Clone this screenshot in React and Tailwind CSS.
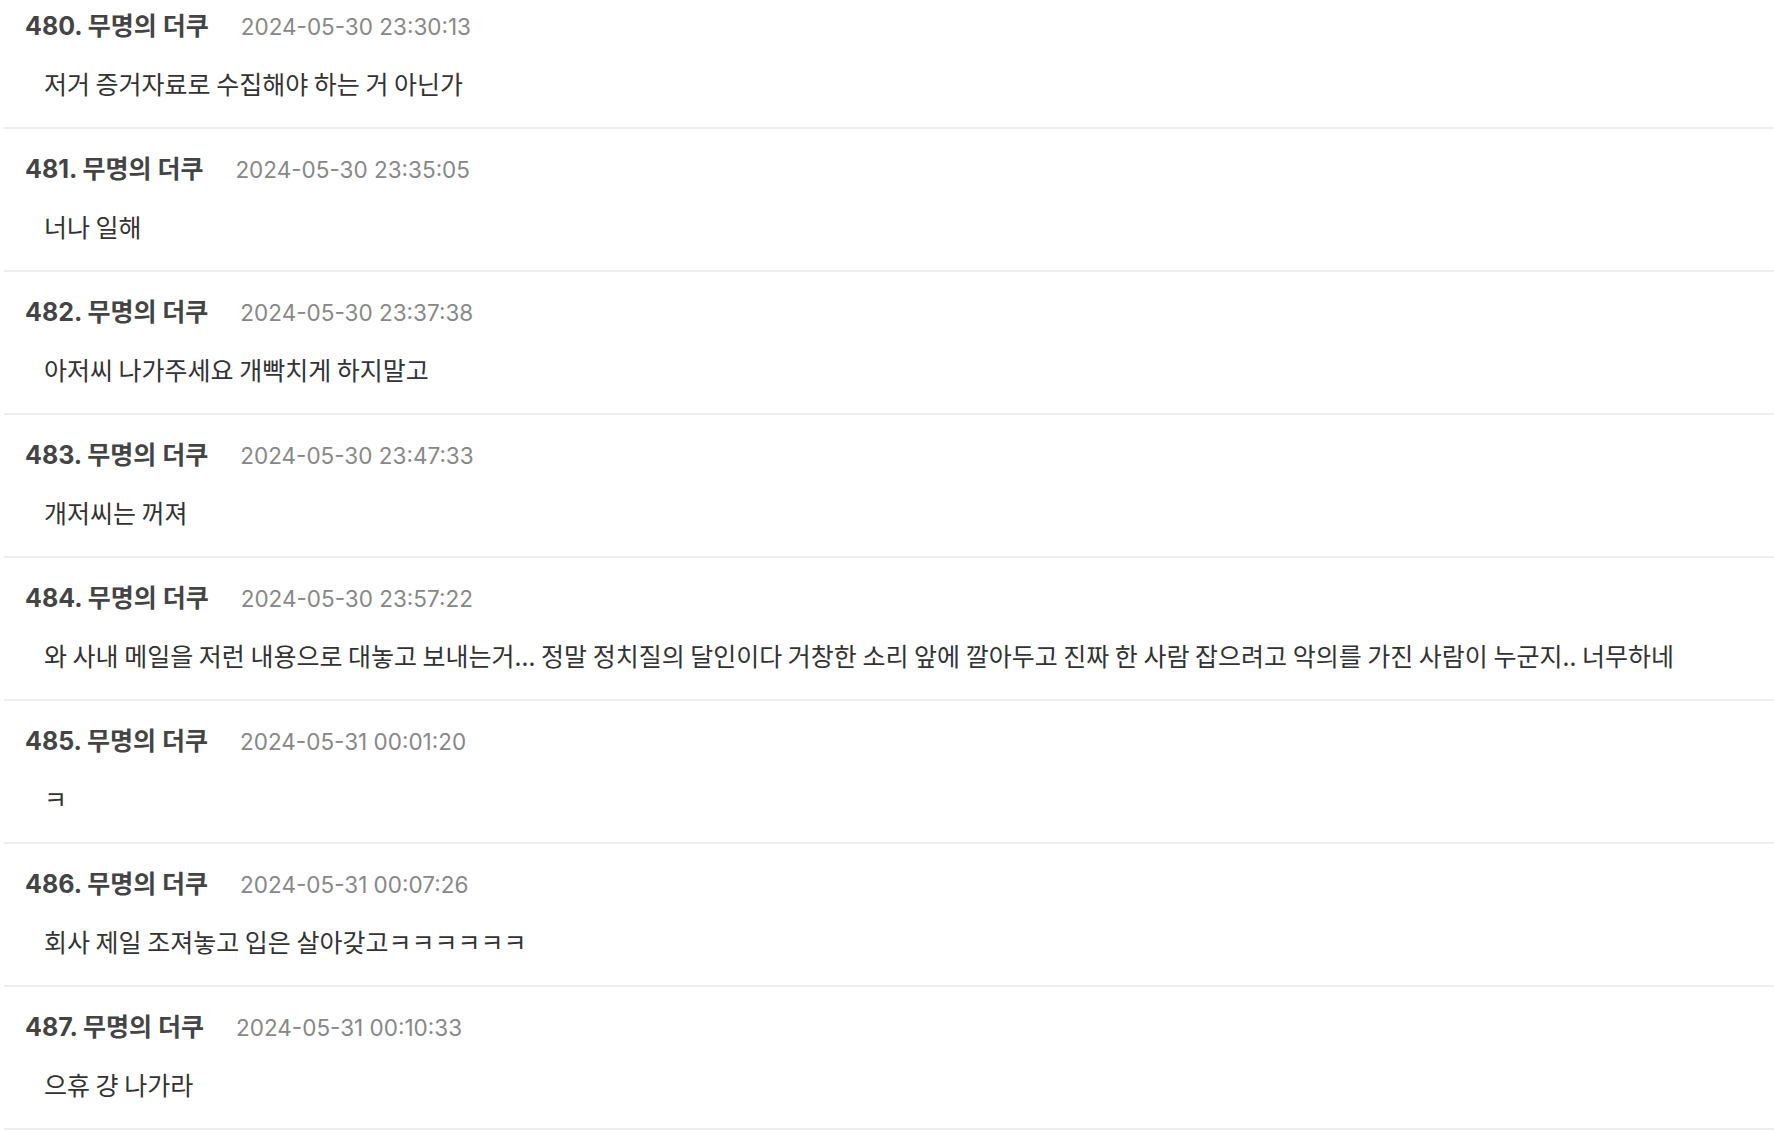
import React from "react";

const comments = [
  { no: 480, date: "2024-05-30 23:30:13", body: "저거 증거자료로 수집해야 하는 거 아닌가" },
  { no: 481, date: "2024-05-30 23:35:05", body: "너나 일해" },
  { no: 482, date: "2024-05-30 23:37:38", body: "아저씨 나가주세요 개빡치게 하지말고" },
  { no: 483, date: "2024-05-30 23:47:33", body: "개저씨는 꺼져" },
  {
    no: 484,
    date: "2024-05-30 23:57:22",
    body: "와 사내 메일을 저런 내용으로 대놓고 보내는거... 정말 정치질의 달인이다 거창한 소리 앞에 깔아두고 진짜 한 사람 잡으려고 악의를 가진 사람이 누군지.. 너무하네",
  },
  { no: 485, date: "2024-05-31 00:01:20", body: "ㅋ" },
  { no: 486, date: "2024-05-31 00:07:26", body: "회사 제일 조져놓고 입은 살아갖고ㅋㅋㅋㅋㅋㅋ" },
  { no: 487, date: "2024-05-31 00:10:33", body: "으휴 걍 나가라" },
];

export default function App() {
  return (
    <div className="min-h-screen bg-white overflow-hidden">
      {/* comment list, scrolled a little past the top */}
      <div className="ml-[4px] -mt-[14px]">
        {comments.map((c) => (
          <div key={c.no} className="border-b-2 border-[#eeeeee] pt-[25px] pb-[28px]">
            <div className="flex items-center h-[32px] pl-[21px] font-['Inter','Noto_Sans_CJK_KR',sans-serif]">
              <span className="text-[25px] font-bold text-[#444444]">
                {c.no}. 무명의 더쿠
              </span>
              <span className="ml-[32px] text-[22.5px] text-[#888888]">{c.date}</span>
            </div>
            <p className="mt-[24px] h-[32px] leading-[32px] pl-[40px] text-[25px] text-[#333333] font-['Noto_Sans_CJK_KR',sans-serif] whitespace-nowrap">
              {c.body}
            </p>
          </div>
        ))}
      </div>
    </div>
  );
}
